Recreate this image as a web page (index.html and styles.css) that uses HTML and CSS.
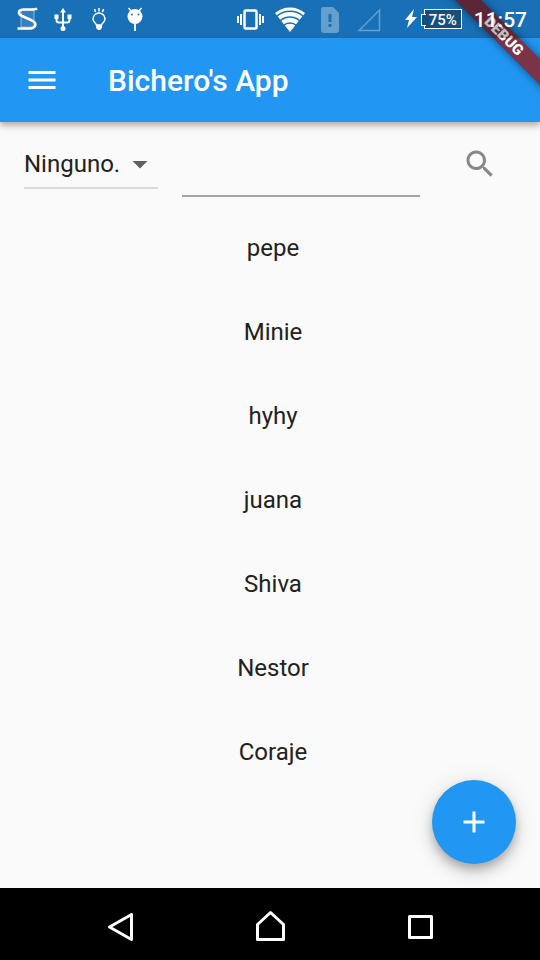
FILE: index.html
```html
<!DOCTYPE html>
<html lang="es">
<head>
<meta charset="utf-8">
<meta name="viewport" content="width=device-width, initial-scale=1">
<title>Bichero's App</title>
<link rel="stylesheet" href="styles.css">
</head>
<body>
<div class="screen">
  <div class="status">
    <div class="status-group">
      <svg class="notif" viewBox="0 0 36 38" aria-hidden="true"><path d="M12 10h13v17H12z" fill="#fff" fill-opacity=".12" stroke="#8db9de" stroke-width="1"/><path d="M28 8.500C26 10 24 9.500 14 9.500C8.500 10 9 14 13 16L23 20.500C28 23 27.500 27 22 28.500H8.500" fill="none" stroke="#fff" stroke-width="2.500"/></svg>
      <svg class="notif" viewBox="0 0 36 38" aria-hidden="true"><path d="M18 11v17M11.500 16v4q0 2.500 2.500 2.500h8q2.500 0 2.500-2.500v-4" fill="none" stroke="#fff" stroke-width="2"/><path d="M18 8l3 4.500h-6zM9.500 14.500h4V19h-4zM22.500 14.500h4V19h-4z" fill="#fff"/><circle cx="18" cy="28.500" r="2.500" fill="#fff"/></svg>
      <svg class="notif" viewBox="0 0 36 38" aria-hidden="true"><path d="M15.500 25c0-1.500-3.500-2.500-3.500-6a6 6 0 0 1 12 0c0 3.500-3.500 4.500-3.500 6z" fill="none" stroke="#fff" stroke-width="1.500"/><path d="M15 25h6v3l-2 2h-2l-2-2z" fill="#fff"/><path d="M18 8v3.500M13.500 9l1 3M22.500 9l-1 3" stroke="#fff" stroke-width="1.500"/></svg>
      <svg class="notif" viewBox="0 0 36 38" aria-hidden="true"><circle cx="18" cy="16.500" r="7.500" fill="#fff"/><path d="M11.500 8l3 3.500M24.500 8l-3 3.500" stroke="#fff" stroke-width="1.500"/><path d="M18 24v7" stroke="#fff" stroke-opacity=".9" stroke-width="2"/><circle cx="15" cy="14.500" r="1" fill="#1971b6"/><circle cx="21.500" cy="14.500" r="1" fill="#1971b6"/></svg>
    </div>
    <div class="status-group">
      <svg class="signal" viewBox="0 0 40 38" aria-hidden="true"><rect x="14.500" y="10.500" width="12" height="18" rx="1.500" fill="none" stroke="#fff" stroke-width="2.500"/><path d="M11 14v11M30 14v11" stroke="#fff" stroke-width="2"/><path d="M8 16v7M33 16v7" stroke="#fff" stroke-width="2"/></svg>
      <svg class="signal" viewBox="0 0 40 38" aria-hidden="true"><path d="M5 13a23 23 0 0 1 30 0L20 32z" fill="#fff"/><path d="M6.500 16.500a20 20 0 0 1 27 0M10 21a14.500 14.500 0 0 1 20 0M13.500 25.500a9.500 9.500 0 0 1 13 0" fill="none" stroke="#1971b6" stroke-width="1.500"/></svg>
      <svg class="signal" viewBox="0 0 40 38" aria-hidden="true"><path d="M13 7h10l6 6v17q0 3-3 3H14q-3 0-3-3V10q0-3 2-3z" fill="#659fce"/><path d="M20 14v8M20 24v3" stroke="#1971b6" stroke-width="3"/></svg>
      <svg class="signal" viewBox="0 0 40 38" aria-hidden="true"><path d="M29.500 10v20.500H9z" fill="none" stroke="#659fce" stroke-width="1.500"/></svg>
      <svg class="bolt" viewBox="0 0 14 20" aria-hidden="true"><path d="M10 0L1 11h4l-2 8L13 8H8z" fill="#fff"/></svg>
      <span class="battery">75%</span>
      <time class="clock">11:57</time>
    </div>
  </div>
  <div class="ribbon-area"><span class="ribbon">DEBUG</span></div>
  <header class="appbar">
    <button class="icon-button" type="button" aria-label="Menu"><svg class="icon" viewBox="0 0 24 24"><path d="M3 18h18v-2H3v2zm0-5h18v-2H3v2zm0-7v2h18V6H3z" fill="#fff"/></svg></button>
    <h1 class="title">Bichero's App</h1>
  </header>
  <main class="content">
    <form class="filters">
      <div class="picker">
        <select class="picker-select" aria-label="Filtro"><option>Ninguno.</option></select>
        <svg class="picker-arrow" viewBox="0 0 24 24" aria-hidden="true"><path d="M7 10l5 5 5-5z" fill="#616161"/></svg>
      </div>
      <input class="query" type="text" aria-label="Buscar">
      <button class="icon-button" type="button" aria-label="Buscar"><svg class="icon" viewBox="0 0 24 24"><path d="M15.500 14h-.790l-.280-.270C15.410 12.590 16 11.110 16 9.500 16 5.910 13.090 3 9.500 3S3 5.910 3 9.500 5.910 16 9.500 16c1.610 0 3.090-.590 4.230-1.570l.270.280v.790l5 4.990L20.490 19l-4.990-5zm-6 0C7.010 14 5 11.990 5 9.500S7.010 5 9.500 5 14 7.010 14 9.500 11.990 14 9.500 14z" fill="#888"/></svg></button>
    </form>
    <ul class="list">
      <li class="item">pepe</li>
      <li class="item">Minie</li>
      <li class="item">hyhy</li>
      <li class="item">juana</li>
      <li class="item">Shiva</li>
      <li class="item">Nestor</li>
      <li class="item">Coraje</li>
    </ul>
    <button class="fab" type="button" aria-label="Agregar"><svg class="icon" viewBox="0 0 24 24"><path d="M19 13h-6v6h-2v-6H5v-2h6V5h2v6h6v2z" fill="#fff"/></svg></button>
  </main>
  <nav class="navbar">
    <button class="nav-button" type="button" aria-label="Atrás"><svg class="icon" viewBox="0 0 36 36"><path d="M29.500 5.500v25L7.500 18z" fill="none" stroke="#fff" stroke-width="3" stroke-linejoin="round"/></svg></button>
    <button class="nav-button" type="button" aria-label="Inicio"><svg class="icon" viewBox="0 0 36 36"><path d="M5.500 30.500v-15L18.500 3.500l13 12v15z" fill="none" stroke="#fff" stroke-width="3" stroke-linejoin="round"/></svg></button>
    <button class="nav-button" type="button" aria-label="Recientes"><svg class="icon" viewBox="0 0 36 36"><rect x="7.500" y="7.500" width="22" height="21" fill="none" stroke="#fff" stroke-width="3" stroke-linejoin="round"/></svg></button>
  </nav>
</div>
</body>
</html>
```
FILE: styles.css
```css
* { box-sizing: border-box; }
body {
  margin: 0;
  background: #fafafa;
  color: #212121;
  font-family: Roboto, "Liberation Sans", sans-serif;
  font-size: 24px;
}
button {
  border: 0;
  padding: 0;
  background: none;
  display: flex;
  align-items: center;
  justify-content: center;
}
.screen {
  position: relative;
  min-height: 100vh;
  display: flex;
  flex-direction: column;
  background: linear-gradient(#2196f3, #2196f3) top / 100% 38px no-repeat;
}
.icon { width: 36px; height: 36px; display: block; }

.status {
  position: relative;
  z-index: 3;
  height: 38px;
  padding: 0 13px 0 9px;
  display: flex;
  justify-content: space-between;
  background: rgba(0, 0, 0, 0.25);
  color: #fff;
}
.status-group { display: flex; align-items: center; }
.notif { width: 36px; height: 38px; }
.signal { width: 40px; height: 38px; }
.bolt { width: 14px; height: 20px; margin-left: 14px; }
.battery {
  position: relative;
  width: 38px;
  height: 20px;
  margin-left: 6px;
  border: 1px solid #fff;
  background: #154f80;
  font-size: 15px;
  font-weight: 500;
  line-height: 20px;
  text-align: center;
}
.battery::before {
  content: "";
  position: absolute;
  left: -4px;
  top: 4px;
  width: 4px;
  height: 10px;
  border: 1px solid #fff;
  border-right: 0;
  background: #154f80;
}
.clock {
  margin-left: 12px;
  padding-top: 2px;
  font-size: 21px;
  font-weight: 500;
}

.ribbon-area {
  position: absolute;
  z-index: 2;
  top: 0;
  right: 0;
  width: 120px;
  height: 120px;
  overflow: hidden;
  pointer-events: none;
}
.ribbon {
  position: absolute;
  top: 27px;
  right: -64px;
  width: 200px;
  height: 18px;
  background:
    linear-gradient(rgba(183, 28, 28, 0.63), rgba(183, 28, 28, 0.63)),
    rgba(0, 0, 0, 0.4);
  box-shadow: 0 0 9px rgba(0, 0, 0, 0.5);
  color: #fff;
  font-size: 15px;
  font-weight: 900;
  line-height: 18px;
  text-align: center;
  transform: rotate(45deg);
}

.appbar {
  position: relative;
  z-index: 1;
  height: 84px;
  padding-left: 6px;
  display: flex;
  align-items: center;
  gap: 30px;
  background: #2196f3;
  color: #fff;
  box-shadow: 0 3px 6px rgba(0, 0, 0, 0.28), 0 6px 8px rgba(0, 0, 0, 0.06);
}
.icon-button { width: 72px; height: 72px; }
.title {
  margin: 0;
  padding-top: 2px;
  font-size: 30px;
  font-weight: 500;
  line-height: 36px;
}

.content { position: relative; flex: 1; }
.filters {
  height: 84px;
  padding: 0 24px;
  display: grid;
  grid-template-columns: 134px 1fr 72px;
  column-gap: 24px;
  align-items: center;
}
.picker { position: relative; border-bottom: 2px solid #dadada; }
.picker-select {
  display: block;
  width: 100%;
  height: 48px;
  padding: 2px 36px 0 0;
  border: 0;
  appearance: none;
  background: none;
  color: inherit;
  font: inherit;
}
.picker-arrow {
  position: absolute;
  right: 0;
  top: 7px;
  width: 36px;
  height: 36px;
  pointer-events: none;
}
.query {
  width: 100%;
  height: 66px;
  padding: 0;
  border: 0;
  border-bottom: 2px solid #a5a5a5;
  background: none;
  font: inherit;
}
.list { margin: 0; padding: 0 0 0 6px; list-style: none; }
.item {
  height: 84px;
  display: flex;
  align-items: center;
  justify-content: center;
}
.fab {
  position: absolute;
  right: 24px;
  bottom: 24px;
  width: 84px;
  height: 84px;
  border-radius: 50%;
  background: #2196f3;
  box-shadow: 0 5px 8px -1px rgba(0, 0, 0, 0.2), 0 9px 15px rgba(0, 0, 0, 0.14), 0 2px 27px rgba(0, 0, 0, 0.1);
}

.navbar {
  position: relative;
  height: 72px;
  display: flex;
  justify-content: center;
  background: #000;
}
.nav-button { width: 150px; height: 72px; padding-top: 6px; }
```
